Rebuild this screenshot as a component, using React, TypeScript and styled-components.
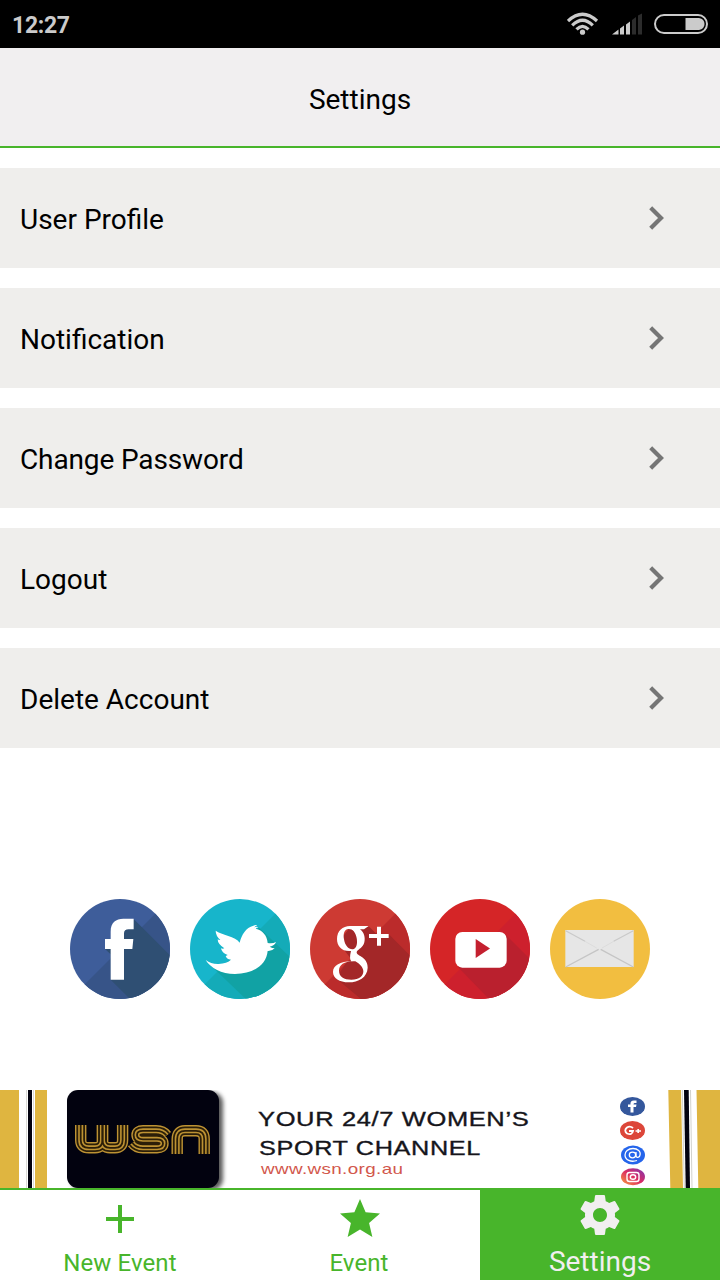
import React from 'react';
import styled, { createGlobalStyle } from 'styled-components';

const GREEN = '#48b52b';

const GlobalStyle = createGlobalStyle`
  * { box-sizing: border-box; }
  body { margin: 0; background: #fff; font-family: Roboto, sans-serif; color: #000; }
  svg { display: block; flex: none; }
`;

const Screen = styled.div`
  display: flex;
  flex-direction: column;
  width: 720px;
  height: 1280px;
  overflow: hidden;
  background: #fff;
`;

const StatusBar = styled.div`
  display: flex;
  align-items: center;
  justify-content: space-between;
  height: 48px;
  padding: 2px 0 0 12px;
  background: #000;
`;

const Clock = styled.span`
  padding-top: 2px;
  font-size: 23px;
  font-weight: 700;
  line-height: 44px;
  letter-spacing: -0.3px;
  color: #cbcbcb;
`;

const Header = styled.header`
  display: flex;
  align-items: center;
  justify-content: center;
  height: 100px;
  padding-top: 6px;
  background: #f1eff0;
  border-bottom: 2px solid ${GREEN};
`;

const Title = styled.h1`
  margin: 0;
  font-size: 28px;
  font-weight: 400;
  line-height: 34px;
`;

const Menu = styled.nav`
  display: flex;
  flex-direction: column;
  gap: 20px;
  padding-top: 20px;
`;

const MenuRow = styled.div`
  display: flex;
  align-items: center;
  justify-content: space-between;
  height: 100px;
  padding: 0 55px 0 20px;
  background: #efeeec;
`;

const RowLabel = styled.span<{ $tracking?: number }>`
  padding-top: 3px;
  font-size: 28px;
  line-height: 34px;
  letter-spacing: ${(p) => p.$tracking ?? 0}px;
`;

const SocialRow = styled.div`
  display: flex;
  flex: 1;
  align-items: center;
  justify-content: center;
  gap: 20px;
  padding-top: 60px;
`;

const Banner = styled.div`
  display: flex;
  height: 98px;
  overflow: hidden;
  background: #fff;
`;

const LogoTile = styled.div`
  display: flex;
  flex: none;
  align-items: center;
  justify-content: center;
  width: 152px;
  height: 98px;
  margin-left: 19px;
  border-radius: 11px;
  background: #02020f;
  box-shadow: 4px 2px 4px rgba(0, 0, 0, 0.65);
`;

const BannerCopy = styled.div`
  display: flex;
  flex: none;
  flex-direction: column;
  align-items: flex-start;
  width: 400px;
  padding: 15px 0 0 39px;
  font-family: 'Liberation Sans', sans-serif;
`;

const Slogan = styled.span<{ $stretch: number; $indent?: number }>`
  margin-left: ${(p) => p.$indent ?? 0}px;
  font-size: 20px;
  line-height: 28.5px;
  letter-spacing: 0.5px;
  white-space: nowrap;
  color: #15151b;
  -webkit-text-stroke: 0.35px #15151b;
  transform: scaleX(${(p) => p.$stretch});
  transform-origin: left;
`;

const Website = styled.span`
  margin: -1px 0 0 3px;
  font-size: 15px;
  line-height: 16px;
  letter-spacing: 0.3px;
  color: #d2574c;
  transform: scaleX(1.255);
  transform-origin: left;
`;

const BadgeColumn = styled.div`
  flex: none;
  width: 49px;
`;

const TabBar = styled.nav`
  display: flex;
  height: 92px;
  border-top: 2px solid ${GREEN};
`;

const Tab = styled.div<{ $active?: boolean }>`
  display: flex;
  flex: 1;
  flex-direction: column;
  align-items: center;
  background: ${(p) => (p.$active ? GREEN : '#fff')};
  color: ${(p) => (p.$active ? '#f1eff0' : GREEN)};
`;

const TabIcon = styled.div<{ $top: number; $height: number }>`
  height: ${(p) => p.$height}px;
  padding-top: ${(p) => p.$top}px;
`;

const TabLabel = styled.span<{ $size: number; $shift?: number; $tracking?: number }>`
  margin-left: ${(p) => p.$shift ?? 0}px;
  font-size: ${(p) => p.$size}px;
  line-height: 30px;
  letter-spacing: ${(p) => p.$tracking ?? 0}px;
`;

const StatusIcons = () => (
  <svg width="153" height="46" viewBox="567 2 153 46">
    <g fill="none" stroke="#cbcbcb" strokeWidth="3.2">
      <path d="M568 21Q582.5 7.5 597 21" />
      <path d="M572.2 25.4Q582.5 15.2 592.8 25.4" />
      <path d="M576.5 29.4Q582.5 23.2 588.5 29.4" />
    </g>
    <circle cx="582.5" cy="32.2" r="2.6" fill="#cbcbcb" />
    <path d="M612 34.5L618.5 29.5V34.5ZM620 28.5L624 25.5V34.5H620ZM626 24.5L630 21.5V34.5H626Z" fill="#cbcbcb" />
    <path d="M632 20L636 17V34.5H632ZM638 15.5L642 13.5V34.5H638Z" fill="#2c2c2c" />
    <rect x="655" y="15" width="52" height="18" rx="9" fill="none" stroke="#cbcbcb" strokeWidth="2" />
    <path d="M685.5 18H699Q704.5 19 704.5 24T699 30H685.5Z" fill="#cbcbcb" />
  </svg>
);

const Chevron = () => (
  <svg width="16" height="26" viewBox="0 0 16 26">
    <path d="M1.700 2.800L12 13L1.700 23.200" fill="none" stroke="#757575" strokeWidth="4.200" />
  </svg>
);

interface DiscProps {
  id: string;
  base: string;
  half?: string;
  shade?: string;
  shadow?: string;
  children: React.ReactNode;
}

const Disc = ({ id, base, half, shade, shadow, children }: DiscProps) => (
  <svg width="100" height="100" viewBox="0 0 300 300">
    <clipPath id={id}>
      <circle cx="150" cy="150" r="150" />
    </clipPath>
    <g clipPath={`url(#${id})`}>
      <rect width="300" height="300" fill={base} />
      {half && <path d="M-5 305L305-5V305Z" fill={half} />}
      {shadow && <path d={shadow} fill={shade} />}
    </g>
    {children}
  </svg>
);

const SocialIcons = () => (
  <>
    <Disc id="fb" base="#3e5d9a" half="#375488" shade="#2f4f73" shadow="M191 60L360 229V360H240L122 242V166L105 150Z">
      <path
        fill="#fff"
        d="M122 242V150H105V120H122V98C122 70 138 59 160 59H191V91H176Q162 91 162 103V120H190L187 150H162V242Z"
      />
    </Disc>
    <Disc id="tw" base="#17b5cb" half="#14abb8" shade="#11a2a4" shadow="M205 84L370 240V360H230L60 197L160 200Z">
      <path
        fill="#fff"
        d="M77 95C94 108 137 111 149 131C155 107 168 85 190 80Q197 77 202 79Q195 82 193 85Q201 82 206 85Q199 86 197 89C218 94 231 109 233 132Q247 135 258 129Q254 140 239 143Q247 148 254 148Q246 157 233 156C229 198 190 225 135 225C94 225 62 207 47 183Q64 196 86 195Q111 193 123 182Q109 180 107 171Q111 170 113 168Q95 162 93 148Q98 150 103 148Q83 135 83 121Q87 124 91 123Q77 110 77 95Z"
      />
    </Disc>
    <Disc id="gp" base="#cd3a33" half="#bb2b2b" shade="#a32728" shadow="M176 82L360 262V360H225L78 238L110 190L125 182L85 130L118 88ZM236 105L360 230V262L190 110Z">
      <path
        fill="#fff"
        fillRule="evenodd"
        d="M120 81H176L162 91H150C163 101 166 116 163 130C160 145 145 151 141 157C133 171 174 171 173 206C172 235 145 250 116 250C88 250 69 238 69 219C69 199 91 188 124 187Q117 180 123 156C96 159 81 141 81 120C81 96 98 81 120 81ZM115 90C103 91 99 104 102 121C105 140 116 152 128 151C140 149 143 134 140 117C137 99 127 89 115 90ZM130 187C102 187 87 198 87 215C87 233 102 242 124 242C148 242 160 231 160 217C160 206 149 194 136 187Z"
      />
      <path fill="#fff" d="M177 105H201V83H213V105H236V117H213V140H201V117H177Z" />
    </Disc>
    <Disc id="yt" base="#d52527" half="#cd202d" shade="#ba202e" shadow="M225 105L360 240V360H235L84 204Z">
      <rect x="76" y="99" width="154" height="107" rx="21" fill="#fff" />
      <path d="M137 120L180 148.500L137 177Z" fill="#c4202f" />
    </Disc>
    <Disc id="mail" base="#f2be40">
      <rect x="46" y="93" width="205" height="111" fill="#e6e6e6" />
      <path d="M47 204L146 151M250 204L152 151" stroke="#c5c5c5" strokeWidth="4" />
      <path d="M47 95L105 127M250 95L191 127" stroke="#c9c9c9" strokeWidth="3.500" />
      <path d="M105 127L140 147M191 127L156 147" fill="none" stroke="#dadada" strokeWidth="2.500" />
    </Disc>
  </>
);

const LeftStripes = () => (
  <svg width="48" height="98">
    <rect width="19" height="98" fill="#dfb540" />
    <path d="M26.500 0V98M33.500 0V98" stroke="#d9d9d5" strokeWidth="1" />
    <rect x="28" width="4" height="98" fill="#02020f" />
    <rect x="35" width="12" height="98" fill="#dfb540" />
  </svg>
);

const RightStripes = () => (
  <svg width="52" height="98">
    <path d="M0.300 0H13L15 98H2.300ZM28.500 0H52V98H30.300Z" fill="#dfb540" />
    <path d="M14.300 0L16.300 98M22.500 0L24 98" stroke="#d2d2cc" />
    <path d="M16 0H20.700L22 98H17.700Z" fill="#02020f" />
  </svg>
);

// Nested strokes, widest first, leave four parallel gold lines along each curve.
const logoStripes = [
  { width: 11.4, color: '#bd9233' },
  { width: 8.6, color: '#2b1e08' },
  { width: 5, color: '#bd9233' },
  { width: 1.8, color: '#2b1e08' },
];

const WsnLogo = () => (
  <svg width="138" height="32" viewBox="0 0 138 32">
    {logoStripes.map(({ width, color }) => (
      <g key={width} fill="none" stroke={color} strokeWidth={width}>
        <path d="M6.700 2V17Q6.700 24.800 15 24.800H21Q28.500 24.800 28.500 17V2" />
        <path d="M28.500 2V17Q28.500 24.800 36 24.800H41Q48.600 24.800 48.600 17V2" />
        <path d="M92.500 12.500Q89 7.800 82 7.800H69Q63 7.800 63 12T69 16.300H83Q89 16.300 89 20.500T83 24.800H69Q62 24.800 58.500 20" />
        <path d="M103.200 31V16Q103.200 7.800 111 7.800H122Q130.200 7.800 130.200 16V31" />
      </g>
    ))}
  </svg>
);

const BannerBadges = () => (
  <svg width="49" height="98" viewBox="619 1090 49 98">
    <defs>
      <linearGradient id="insta" x1="0" y1="1" x2="1" y2="0">
        <stop offset="0" stopColor="#f8a33c" />
        <stop offset="0.5" stopColor="#dc2c62" />
        <stop offset="1" stopColor="#7b35b5" />
      </linearGradient>
    </defs>
    <ellipse cx="632.500" cy="1106.500" rx="12.500" ry="9.500" fill="#34579c" />
    <path d="M630.500 1112.500V1107H628V1104.500H630.500Q630 1100.500 634 1100.500H636.500V1103H634.500Q633.500 1103 633.500 1104.500H636.500L636 1107H633.500V1112.500Z" fill="#fff" />
    <ellipse cx="632.500" cy="1130.500" rx="12.500" ry="9.500" fill="#dc4639" />
    <path d="M633 1128Q630 1125.500 627 1127.500Q623.500 1130.500 627 1133.500Q632 1135.500 633 1131H629" fill="none" stroke="#fff" strokeWidth="1.800" />
    <path d="M635.500 1131H641M638.200 1129V1133" stroke="#fff" strokeWidth="1.700" />
    <ellipse cx="633" cy="1155" rx="12" ry="9.500" fill="#2565eb" />
    <g fill="none" stroke="#fff" strokeWidth="1.300">
      <ellipse cx="632.500" cy="1155" rx="3.200" ry="2.800" />
      <path d="M636 1152V1156Q637 1158.500 639.500 1156.500C642 1151 637 1148.500 633 1148.500C628 1148.500 625 1151.500 625 1155C625 1160 631 1162.500 637 1160.500" />
    </g>
    <ellipse cx="633" cy="1176.700" rx="12" ry="8.500" fill="url(#insta)" />
    <rect x="627" y="1172.500" width="12" height="9" rx="2.500" fill="none" stroke="#fff" strokeWidth="1.400" />
    <ellipse cx="633" cy="1177" rx="2.700" ry="2.200" fill="none" stroke="#fff" strokeWidth="1.400" />
  </svg>
);

const PlusIcon = () => (
  <svg width="28" height="28" viewBox="0 0 28 28">
    <path d="M12 0H16V12H28V16H16V28H12V16H0V12H12Z" fill="currentColor" />
  </svg>
);

const StarIcon = () => (
  <svg width="40" height="38" viewBox="2 2 20 19">
    <path fill="currentColor" d="M12 17.270L18.180 21l-1.640-7.030L22 9.240l-7.190-.61L12 2 9.190 8.630 2 9.240l5.460 4.730L5.820 21z" />
  </svg>
);

const GearIcon = () => (
  <svg width="40" height="40" viewBox="2 2 20 20">
    <path
      fill="currentColor"
      d="M19.430 12.980c.04-.32.07-.64.07-.98s-.03-.66-.07-.98l2.110-1.650c.19-.15.24-.42.12-.64l-2-3.460c-.12-.22-.39-.3-.61-.22l-2.490 1c-.52-.4-1.080-.73-1.690-.98l-.38-2.650C14.460 2.180 14.250 2 14 2h-4c-.25 0-.46.18-.49.42l-.38 2.650c-.61.25-1.170.59-1.690.98l-2.490-1c-.23-.09-.49 0-.61.22l-2 3.460c-.13.22-.07.49.12.64l2.110 1.650c-.04.32-.07.65-.07.98s.03.66.07.98l-2.110 1.650c-.19.15-.24.42-.12.64l2 3.460c.12.22.39.3.61.22l2.490-1c.52.4 1.080.73 1.690.98l.38 2.650c.03.24.24.42.49.42h4c.25 0 .46-.18.49-.42l.38-2.650c.61-.25 1.170-.59 1.690-.98l2.490 1c.23.09.49 0 .61-.22l2-3.460c.12-.22.07-.49-.12-.64l-2.110-1.650zM12 15.500c-1.930 0-3.500-1.570-3.500-3.500s1.570-3.500 3.500-3.500 3.500 1.570 3.500 3.500-1.570 3.500-3.500 3.500z"
    />
  </svg>
);

const menuItems = [
  { label: 'User Profile' },
  { label: 'Notification' },
  { label: 'Change Password', tracking: -0.13 },
  { label: 'Logout' },
  { label: 'Delete Account' },
];

export default function App() {
  return (
    <Screen>
      <GlobalStyle />
      <StatusBar>
        <Clock>12:27</Clock>
        <StatusIcons />
      </StatusBar>
      <Header>
        <Title>Settings</Title>
      </Header>
      <Menu>
        {menuItems.map(({ label, tracking }) => (
          <MenuRow key={label}>
            <RowLabel $tracking={tracking}>{label}</RowLabel>
            <Chevron />
          </MenuRow>
        ))}
      </Menu>
      <SocialRow>
        <SocialIcons />
      </SocialRow>
      <Banner>
        <LeftStripes />
        <LogoTile>
          <WsnLogo />
        </LogoTile>
        <BannerCopy>
          <Slogan $stretch={1.274}>YOUR 24/7 WOMEN’S</Slogan>
          <Slogan $stretch={1.262} $indent={1}>SPORT CHANNEL</Slogan>
          <Website>www.wsn.org.au</Website>
        </BannerCopy>
        <BadgeColumn>
          <BannerBadges />
        </BadgeColumn>
        <RightStripes />
      </Banner>
      <TabBar>
        <Tab>
          <TabIcon $top={15} $height={58}>
            <PlusIcon />
          </TabIcon>
          <TabLabel $size={24} $tracking={0.1}>New Event</TabLabel>
        </Tab>
        <Tab>
          <TabIcon $top={9} $height={58}>
            <StarIcon />
          </TabIcon>
          <TabLabel $size={24} $shift={-2} $tracking={0.1}>Event</TabLabel>
        </Tab>
        <Tab $active>
          <TabIcon $top={5} $height={57}>
            <GearIcon />
          </TabIcon>
          <TabLabel $size={28}>Settings</TabLabel>
        </Tab>
      </TabBar>
    </Screen>
  );
}
